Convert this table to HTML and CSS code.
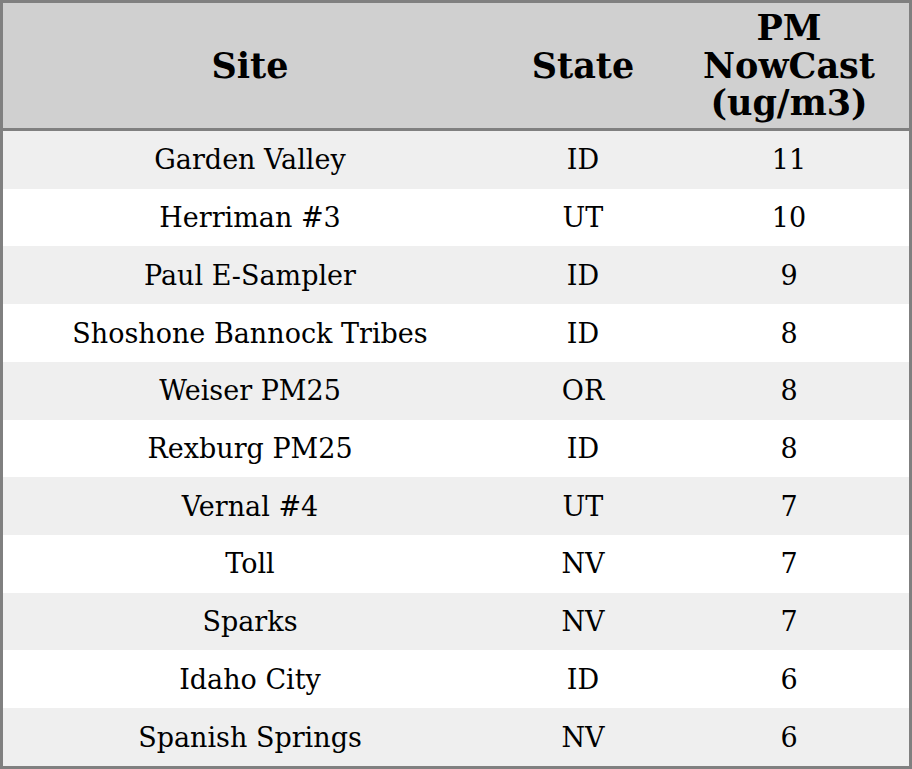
FILE: index.html
```html
<!DOCTYPE html>
<html>
<head>
<meta charset="utf-8">
<link rel="stylesheet" href="styles.css">
</head>
<body>
<table class="aq">
  <thead>
    <tr class="head">
      <th class="c-site">Site</th>
      <th class="c-state">State</th>
      <th class="c-pm">PM<br>NowCast<br>(ug/m3)</th>
    </tr>
  </thead>
  <tbody>
    <tr><td>Garden Valley</td><td>ID</td><td>11</td></tr>
    <tr><td>Herriman #3</td><td>UT</td><td>10</td></tr>
    <tr><td>Paul E-Sampler</td><td>ID</td><td>9</td></tr>
    <tr><td>Shoshone Bannock Tribes</td><td>ID</td><td>8</td></tr>
    <tr><td>Weiser PM25</td><td>OR</td><td>8</td></tr>
    <tr><td>Rexburg PM25</td><td>ID</td><td>8</td></tr>
    <tr><td>Vernal #4</td><td>UT</td><td>7</td></tr>
    <tr><td>Toll</td><td>NV</td><td>7</td></tr>
    <tr><td>Sparks</td><td>NV</td><td>7</td></tr>
    <tr><td>Idaho City</td><td>ID</td><td>6</td></tr>
    <tr><td>Spanish Springs</td><td>NV</td><td>6</td></tr>
  </tbody>
</table>
</body>
</html>
```
FILE: styles.css
```css
html, body {
  margin: 0;
  padding: 0;
  background: #ffffff;
}
.aq {
  width: 912px;
  border-collapse: separate;
  border-spacing: 0;
  border: 3px solid #808080;
  font-family: "DejaVu Serif", serif;
  color: #000000;
  table-layout: fixed;
}
.aq th, .aq td {
  padding: 0;
  text-align: center;
  vertical-align: middle;
}
.head th {
  background: #d0d0d0;
  height: 125px;
  border-bottom: 3px solid #808080;
  font-size: 35px;
  font-weight: bold;
  line-height: 37.5px;
}
.c-site { width: 494px; }
.c-state { width: 172px; }
.aq tbody td {
  height: 57.73px;
  font-size: 27px;
}
.aq tbody tr:nth-child(odd) td {
  background: #efefef;
}
.aq tbody tr:nth-child(even) td {
  background: #ffffff;
}
```
